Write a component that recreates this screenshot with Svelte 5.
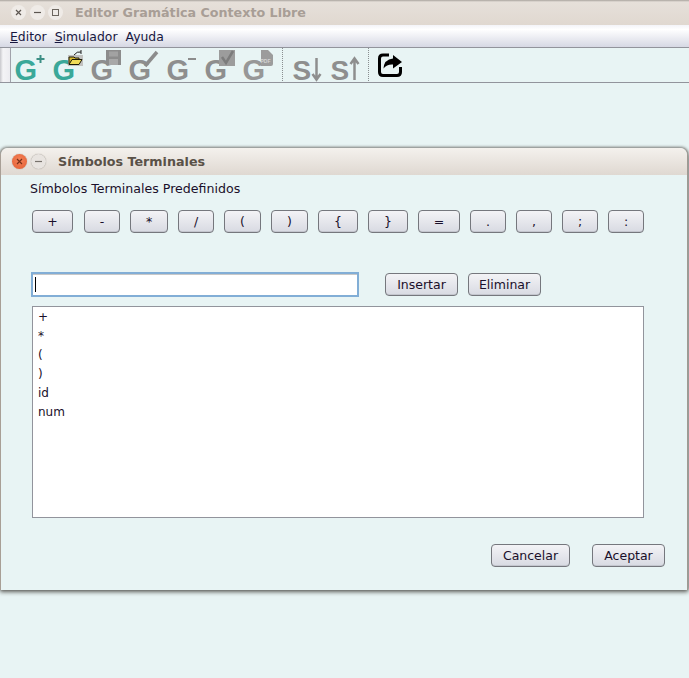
<script>
  const symbols = [
    ['+', 41], ['-', 36], ['*', 38], ['/', 36], ['(', 37], [')', 37], ['{', 40],
    ['}', 40], ['=', 42], ['.', 36], [',', 36], [';', 36], [':', 36]
  ];
  const items = ['+', '*', '(', ')', 'id', 'num'];
</script>

<div class="page">
<div class="main">
  <header class="titlebar">
    <div class="controls">
      <span class="wbtn"><svg width="15" height="15" viewBox="0 0 15 15"><path d="M5 5l5 5M10 5l-5 5" stroke="#5c5650" stroke-width="1.2"/></svg></span>
      <span class="wbtn"><svg width="15" height="15" viewBox="0 0 15 15"><path d="M4 7.500h7" stroke="#5c5650" stroke-width="1.2"/></svg></span>
      <span class="wbtn"><svg width="15" height="15" viewBox="0 0 15 15"><rect x="4.500" y="4.500" width="6" height="6" fill="none" stroke="#6c665f"/></svg></span>
    </div>
    <span class="title">Editor Gramática Contexto Libre</span>
  </header>

  <nav class="menubar">
    <span><u>E</u>ditor</span>
    <span><u>S</u>imulador</span>
    <span>Ayuda</span>
  </nav>

  <div class="toolbar">
    <div class="handle"></div>
    <svg class="tool" viewBox="0 0 38 34">
      <text class="g teal" x="2.500" y="31.500">G</text>
      <path d="M24.500 11h8M28.500 7v8" stroke="#3d8f85" stroke-width="2" fill="none"/>
    </svg>
    <svg class="tool" viewBox="0 0 38 34">
      <text class="g teal" x="2.500" y="31.500">G</text>
      <rect x="18" y="7" width="15" height="11" fill="#c2c2c0"/>
      <path d="M19 16V9h5l1 1h4v2" fill="#d4b830" stroke="#1c1c08"/>
      <path d="M19 16.500l3-5h10l-3 5z" fill="#f0dc58" stroke="#1c1c08"/>
      <path d="M24 7q3-4 7-3M31 2v4" stroke="#222" fill="none"/>
    </svg>
    <svg class="tool" viewBox="0 0 38 34">
      <text class="g grey" x="2.500" y="31.500">G</text>
      <rect x="18" y="2" width="15" height="15" fill="#8c8c8c"/>
      <rect x="21" y="3.500" width="9" height="5" fill="#a2a2a2"/>
      <rect x="21" y="11" width="9" height="6" fill="#a8a8a8"/>
    </svg>
    <svg class="tool" viewBox="0 0 38 34">
      <text class="g grey" x="2.500" y="31.500">G</text>
      <path d="M19 18L31 4" stroke="#8c8c8c" stroke-width="3.500" fill="none"/>
    </svg>
    <svg class="tool" viewBox="0 0 38 34">
      <text class="g grey" x="2.500" y="31.500">G</text>
      <path d="M24 11h8" stroke="#8c8c8c" stroke-width="2" fill="none"/>
    </svg>
    <svg class="tool" viewBox="0 0 38 34">
      <text class="g grey" x="2.500" y="31.500">G</text>
      <rect x="17" y="2" width="16" height="16" fill="#9c9c9c"/>
      <path d="M20 9l4 6 7-12" stroke="#7c7c7c" stroke-width="2.500" fill="none"/>
    </svg>
    <svg class="tool" viewBox="0 0 38 34">
      <text class="g grey2" x="2.500" y="31.500">G</text>
      <path d="M21 2h7l5 5v9q0 2-2 2H21z" fill="#9c9c9c"/>
      <text class="pdf" x="20.500" y="15">PDF</text>
    </svg>
    <div class="sep first"></div>
    <svg class="tool" viewBox="0 0 38 34">
      <text class="s" x="-.5" y="32">S</text>
      <path d="M23.500 10v21M19.500 26l4 5.500 4-5.500" stroke="#8e8e8e" stroke-width="2.500" fill="none"/>
    </svg>
    <svg class="tool narrow" viewBox="0 0 37 34">
      <text class="s" x="-.5" y="32">S</text>
      <path d="M23.500 32V11M19.500 16l4-5.500 4 5.500" stroke="#8e8e8e" stroke-width="2.500" fill="none"/>
    </svg>
    <div class="sep"></div>
    <svg class="share" viewBox="0 0 28 30">
      <path d="M12 5H6Q2.500 5 2.500 8.500V22q0 3.500 3.500 3.500h14q3.500 0 3.500-3.500v-5" stroke="#000" stroke-width="3" fill="none"/>
      <path d="M16 5l9 7-9 6.500v-4q-6-.5-9.500 4 .5-9 9.500-10z" fill="#000"/>
    </svg>
  </div>
</div>

<section class="dialog">
  <header class="dlg-title">
    <span class="dbtn close"><svg width="15" height="15" viewBox="0 0 15 15"><path d="M5 5l5 5M10 5l-5 5" stroke="#7a3018" stroke-width="1.200"/></svg></span>
    <span class="dbtn"><svg width="15" height="15" viewBox="0 0 15 15"><path d="M4 7.500h7" stroke="#77726c" stroke-width="1.200"/></svg></span>
    <span class="dlg-name">Símbolos Terminales</span>
  </header>

  <div class="body">
    <p class="label">Símbolos Terminales Predefinidos</p>

    <div class="symbols">
      {#each symbols as [s, w]}
        <button class="btn" style="width: {w}px">{s}</button>
      {/each}
    </div>

    <div class="entry">
      <div class="input"><span class="caret"></span></div>
      <button class="btn wide">Insertar</button>
      <button class="btn wide">Eliminar</button>
    </div>

    <div class="list">
      {#each items as item}
        <div class="item">{item}</div>
      {/each}
    </div>

    <div class="actions">
      <button class="btn cancel">Cancelar</button>
      <button class="btn wide">Aceptar</button>
    </div>
  </div>
</section>
</div>

<style>
  :global(body) {
    margin: 0;
    background: #e8f4f4;
    font-family: "DejaVu Sans", sans-serif;
    font-size: 12px;
    color: #1a0f2a;
  }

  .page {
    height: 678px;
    overflow: hidden;
    background: #e8f4f4;
  }

  .main {
    height: 83px;
  }

  .titlebar {
    height: 25px;
    box-sizing: border-box;
    display: flex;
    align-items: center;
    background: linear-gradient(#a9a49e 0, #e6e0da 2px, #e0d8d0 100%);
  }

  .controls {
    display: flex;
    gap: 3.5px;
    margin-left: 11px;
  }

  .wbtn {
    width: 15px;
    height: 15px;
    border-radius: 50%;
    background: #efebe7;
    display: block;
  }

  .wbtn svg,
  .dbtn svg {
    display: block;
  }

  .title {
    margin-left: 12px;
    font-weight: 700;
    color: #a89e96;
    font-size: 12.7px;
  }

  .menubar {
    height: 22px;
    box-sizing: border-box;
    display: flex;
    gap: 8px;
    align-items: center;
    padding-left: 10px;
    font-size: 12.4px;
    background: linear-gradient(#f4f4f8 0, #ffffff 20%, #d6d8e4 100%);
    color: #17173f;
  }

  .toolbar {
    height: 36px;
    box-sizing: border-box;
    display: flex;
    align-items: flex-start;
    border-top: 1px solid #92949c;
    border-bottom: 1px solid #92949c;
    background: #e8f4f4;
  }

  .handle {
    width: 10px;
    height: 34px;
    background: linear-gradient(90deg, #c8c8cc, #f4f4f6 30%, #ececf0);
    border-right: 1px solid #a0a2aa;
    margin-right: 1px;
  }

  .tool {
    width: 38px;
    height: 34px;
    flex: none;
    overflow: visible;
  }

  .tool.narrow {
    width: 37px;
  }

  .g {
    font-family: "Liberation Sans", sans-serif;
    font-weight: 700;
    font-size: 29px;
  }

  .teal {
    fill: #3aa899;
  }

  .grey {
    fill: #8e8e8e;
  }

  .grey2 {
    fill: #979797;
  }

  .pdf {
    font-family: "Liberation Sans", sans-serif;
    font-weight: 700;
    font-size: 5px;
    fill: #d4d4d4;
  }

  .s {
    font-family: "Liberation Sans", sans-serif;
    font-weight: 700;
    font-size: 28px;
    fill: #8e8e8e;
  }

  .sep {
    width: 0;
    height: 33px;
    border-left: 1px dotted #8a8e90;
    margin-right: 8px;
  }

  .sep.first {
    margin-left: 4px;
    margin-right: 10px;
  }

  .share {
    width: 28px;
    height: 30px;
    flex: none;
    margin-top: 2px;
  }

  .dialog {
    margin-top: 65px;
    width: 688px;
    height: 442px;
    box-sizing: border-box;
    border-left: 1px solid #a89f96;
    border-right: 1px solid #a09a92;
    border-radius: 7px 7px 0 0;
    background: #e8f4f4;
    box-shadow: 0 -1px 3px rgba(70, 65, 60, 0.6), 0 2px 4px rgba(50, 45, 40, 0.75);
  }

  .dlg-title {
    height: 27px;
    display: flex;
    align-items: center;
    border-radius: 7px 7px 0 0;
    background: linear-gradient(#f4f1ed, #dfd8d1);
    padding-left: 11px;
    gap: 4px;
  }

  .dbtn {
    width: 15px;
    height: 15px;
    border-radius: 50%;
    background: #e8e4e0;
    box-shadow: 0 0 1px #8a847c;
  }

  .dbtn.close {
    background: radial-gradient(circle at 50% 40%, #f5835a, #e25c30);
  }

  .dlg-name {
    margin-left: 8px;
    font-weight: 700;
    color: #5a5148;
    font-size: 12.7px;
  }

  .body {
    padding-left: 29px;
  }

  .label {
    margin: 6px 0 0;
    line-height: 15px;
    font-size: 12.6px;
  }

  .symbols {
    display: flex;
    gap: 10px;
    margin: 14px 0 0 2px;
  }

  .symbols .btn:first-child {
    margin-right: 1px;
  }

  .btn {
    height: 23px;
    box-sizing: border-box;
    padding: 0;
    border: 1px solid #75777d;
    border-radius: 4px;
    background: linear-gradient(#f3f3f6, #d8dae2);
    font-family: "DejaVu Sans", sans-serif;
    font-size: 12.5px;
    color: #1a0f2a;
    box-shadow: inset 0 -1px 0 #c4c6ce;
  }

  .wide {
    width: 73px;
  }

  .entry {
    display: flex;
    align-items: flex-start;
    gap: 10px;
    margin: 39px 0 0 1px;
  }

  .entry .btn {
    margin-top: 1px;
  }

  .input {
    width: 328px;
    height: 25px;
    box-sizing: border-box;
    border: 2px solid #82aed6;
    box-shadow: inset 0 1px 0 #c8c8c8;
    background: #fff;
    padding: 3px 2px;
    margin-right: 16px;
  }

  .caret {
    display: block;
    width: 1px;
    height: 15px;
    background: #000;
  }

  .list {
    width: 612px;
    height: 212px;
    box-sizing: border-box;
    margin: 9px 0 0 2px;
    border: 1px solid #92949c;
    background: #fff;
    padding: 1px 5px;
  }

  .item {
    height: 19px;
    line-height: 19px;
  }

  .actions {
    display: flex;
    gap: 22px;
    justify-content: flex-end;
    width: 635px;
    margin-top: 26px;
  }

  .cancel {
    width: 79px;
  }
</style>
